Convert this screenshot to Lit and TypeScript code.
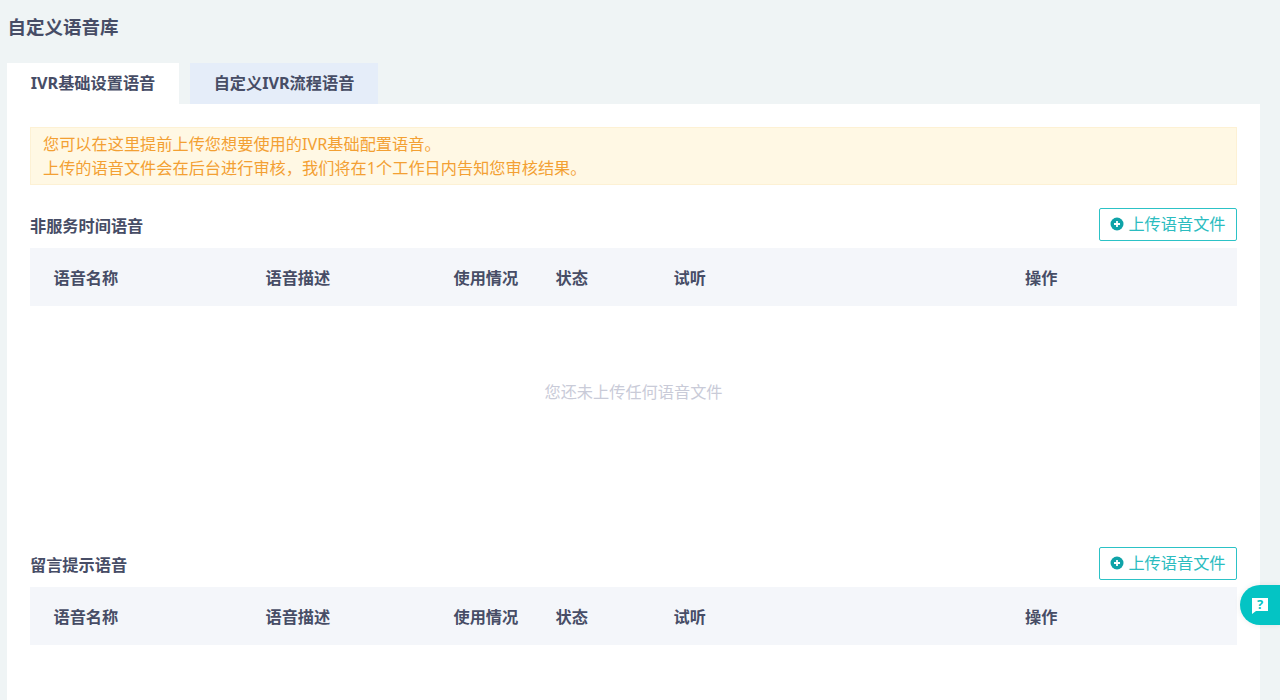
import { LitElement, html, css } from "lit";
import { customElement } from "lit/decorators.js";

const COLS = ["语音名称", "语音描述", "使用情况", "状态", "试听", "操作"];

@customElement("app-root")
export class AppRoot extends LitElement {
  static styles = css`
    :host {
      display: block;
      height: 700px;
      overflow: hidden;
      position: relative;
      background: #eff4f5;
      color: #474d66;
      font-family: "Noto Sans", "Noto Sans CJK SC", sans-serif;
      font-size: 16.2px;
      text-spacing-trim: space-all;
    }
    .page { padding: 13px 20px 0 7px; }
    h1 { margin: 0 0 22px; font-size: 18.5px; line-height: 28px; font-weight: 700; padding-left: 0.5px; }
    .tabs { display: flex; gap: 11px; }
    .tab { height: 41px; line-height: 41px; font-weight: 700; text-align: center; background: #e5edf9; width: 188px; }
    .tab.active { background: #fff; width: 172px; }
    .panel { background: #fff; padding: 23px 23px 0; height: 600px; }
    .alert {
      box-sizing: border-box; height: 58px; padding: 4px 12px;
      background: #fff8e4; border: 1px solid #fdf1d4; color: #f3a033; line-height: 24px;
    }
    .head { display: flex; justify-content: space-between; align-items: flex-end; margin-top: 23px; height: 40px; }
    .head h2 { margin: 0 0 10px; font-size: 16.2px; line-height: 24px; font-weight: 700; }
    .btn {
      box-sizing: border-box; height: 33px; width: 138px; margin-bottom: 7px; padding: 0 0 2px;
      display: flex; align-items: center; justify-content: center; gap: 4px;
      background: #fff; border: 1px solid #2cc2c6; border-radius: 2px;
      color: #2bbcc0; font: inherit; line-height: 24px;
    }
    .btn svg { width: 14px; height: 14px; flex: none; }
    .thead {
      display: grid; grid-template-columns: 212px 188px 102px 118px 351.5px 1fr;
      height: 58px; align-items: center; background: #f4f6fa; font-weight: 700;
    }
    .thead span { padding-left: 23.5px; }
    .empty { height: 218px; display: flex; align-items: center; justify-content: center; padding-bottom: 46px; box-sizing: border-box; color: #c9cbd8; line-height: 24px; }
    .fab {
      position: absolute; left: 1240px; top: 585px; width: 40px; height: 40px;
      border-radius: 20px 0 0 20px; background: #04c4c4;
      display: flex; align-items: center; justify-content: center;
      box-shadow: 0 0 6px rgba(0,0,0,.08);
    }
    .fab svg { width: 18px; height: 18px; }
  `;

  private section(title: string, empty: boolean) {
    return html`
      <div class="head">
        <h2>${title}</h2>
        <button class="btn">
          <svg viewBox="0 0 14 14"><circle cx="7" cy="7" r="6.5" fill="#0fa3a8"/><path d="M4 7h6M7 4v6" stroke="#fff" stroke-width="1.8"/></svg>
          上传语音文件
        </button>
      </div>
      <div class="thead">${COLS.map((c) => html`<span>${c}</span>`)}</div>
      ${empty ? html`<div class="empty">您还未上传任何语音文件</div>` : ""}
    `;
  }

  render() {
    return html`
      <div class="page">
        <h1>自定义语音库</h1>
        <div class="tabs">
          <div class="tab active">IVR基础设置语音</div>
          <div class="tab">自定义IVR流程语音</div>
        </div>
        <div class="panel">
          <div class="alert">您可以在这里提前上传您想要使用的IVR基础配置语音。<br />上传的语音文件会在后台进行审核，我们将在1个工作日内告知您审核结果。</div>
          ${this.section("非服务时间语音", true)}
          ${this.section("留言提示语音", false)}
        </div>
      </div>
      <div class="fab">
        <svg viewBox="0 0 18 18"><path d="M1 2h16v13H5l-4 3z" fill="#fff"/><text x="9" y="13" text-anchor="middle" font-size="13" font-weight="700" font-family="Noto Sans" fill="#04c4c4">?</text></svg>
      </div>
    `;
  }
}
